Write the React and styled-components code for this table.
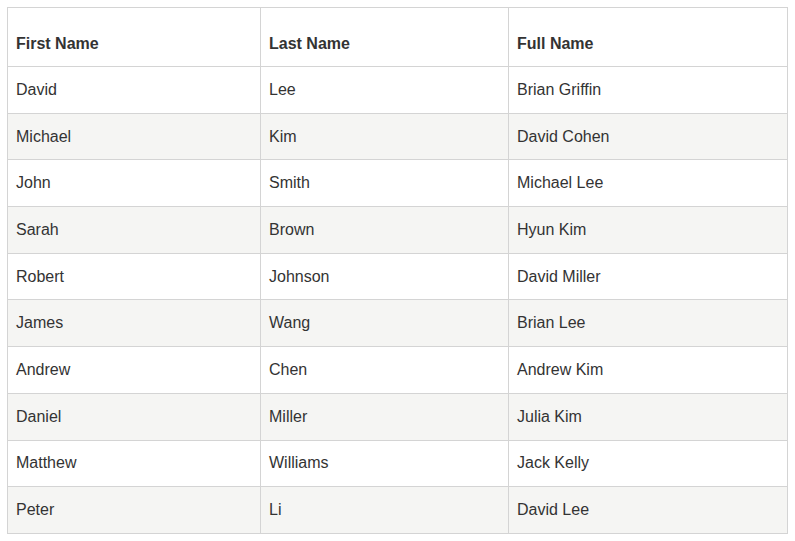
import React from 'react';
import styled, { createGlobalStyle } from 'styled-components';

const GlobalStyle = createGlobalStyle`
    html, body {
        margin: 0;
        padding: 0;
        background: #ffffff;
    }
    body {
        padding: 7px;
        font-family: "Liberation Sans", Arial, sans-serif;
    }
`;

const rows = [
    ['David', 'Lee', 'Brian Griffin'],
    ['Michael', 'Kim', 'David Cohen'],
    ['John', 'Smith', 'Michael Lee'],
    ['Sarah', 'Brown', 'Hyun Kim'],
    ['Robert', 'Johnson', 'David Miller'],
    ['James', 'Wang', 'Brian Lee'],
    ['Andrew', 'Chen', 'Andrew Kim'],
    ['Daniel', 'Miller', 'Julia Kim'],
    ['Matthew', 'Williams', 'Jack Kelly'],
    ['Peter', 'Li', 'David Lee'],
];

function App() {
    return (
        <>
            <GlobalStyle />
            <Table>
                <colgroup>
                    <col style={{ width: '253px' }} />
                    <col style={{ width: '248px' }} />
                    <col />
                </colgroup>
                <thead>
                    <tr>
                        <HeadCell>First Name</HeadCell>
                        <HeadCell>Last Name</HeadCell>
                        <HeadCell>Full Name</HeadCell>
                    </tr>
                </thead>
                <tbody>
                    {rows.map((r, i) => (
                        <Row key={i} $striped={i % 2 === 1}>
                            {r.map((v, j) => <Cell key={j}>{v}</Cell>)}
                        </Row>
                    ))}
                </tbody>
            </Table>
        </>
    );
}

const Table = styled.table`
    width: 781px;
    border-collapse: collapse;
    table-layout: fixed;
    border: 1px solid #d4d4d4;
    color: #333333;
    font-size: 16px;
`;

const HeadCell = styled.th`
    height: 59px;
    box-sizing: border-box;
    padding: 0 8px 11px 8px;
    text-align: left;
    vertical-align: bottom;
    font-weight: bold;
    line-height: 22px;
    border: 1px solid #d4d4d4;
`;

const Row = styled.tr`
    background: ${p => (p.$striped ? '#f5f5f3' : '#ffffff')};
`;

const Cell = styled.td`
    height: 46.7px;
    box-sizing: border-box;
    padding: 0 8px;
    line-height: 22px;
    vertical-align: middle;
    border: 1px solid #d4d4d4;
`;

export default App;
